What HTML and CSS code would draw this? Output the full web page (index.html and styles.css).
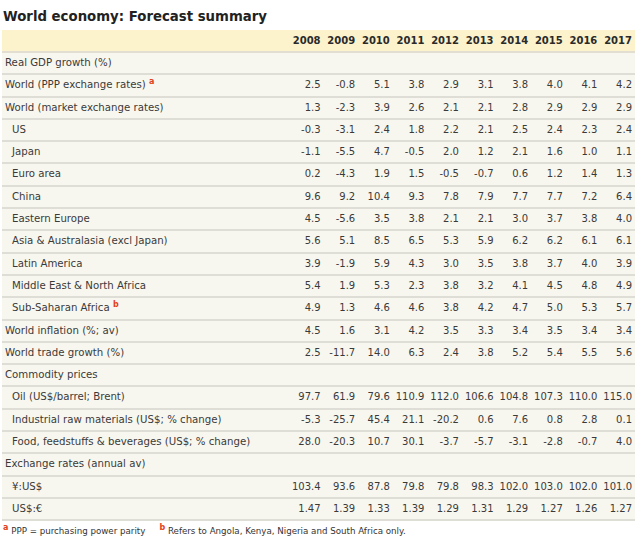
FILE: index.html
```html
<!DOCTYPE html>
<html>
<head>
<meta charset="utf-8">
<link rel="stylesheet" href="styles.css">
</head>
<body>
<div class="page">
<h1 class="title">World economy: Forecast summary</h1>
<table class="fc">
<colgroup><col class="c-label"><col span="10"></colgroup>
<thead>
<tr><th></th><th>2008</th><th>2009</th><th>2010</th><th>2011</th><th>2012</th><th>2013</th><th>2014</th><th>2015</th><th>2016</th><th>2017</th></tr>
</thead>
<tbody>
<tr><td class="lbl">Real GDP growth (%)</td><td></td><td></td><td></td><td></td><td></td><td></td><td></td><td></td><td></td><td></td></tr>
<tr><td class="lbl">World (PPP exchange rates) <sup class="fn">a</sup></td><td>2.5</td><td>-0.8</td><td>5.1</td><td>3.8</td><td>2.9</td><td>3.1</td><td>3.8</td><td>4.0</td><td>4.1</td><td>4.2</td></tr>
<tr><td class="lbl">World (market exchange rates)</td><td>1.3</td><td>-2.3</td><td>3.9</td><td>2.6</td><td>2.1</td><td>2.1</td><td>2.8</td><td>2.9</td><td>2.9</td><td>2.9</td></tr>
<tr><td class="lbl ind">US</td><td>-0.3</td><td>-3.1</td><td>2.4</td><td>1.8</td><td>2.2</td><td>2.1</td><td>2.5</td><td>2.4</td><td>2.3</td><td>2.4</td></tr>
<tr><td class="lbl ind">Japan</td><td>-1.1</td><td>-5.5</td><td>4.7</td><td>-0.5</td><td>2.0</td><td>1.2</td><td>2.1</td><td>1.6</td><td>1.0</td><td>1.1</td></tr>
<tr><td class="lbl ind">Euro area</td><td>0.2</td><td>-4.3</td><td>1.9</td><td>1.5</td><td>-0.5</td><td>-0.7</td><td>0.6</td><td>1.2</td><td>1.4</td><td>1.3</td></tr>
<tr><td class="lbl ind">China</td><td>9.6</td><td>9.2</td><td>10.4</td><td>9.3</td><td>7.8</td><td>7.9</td><td>7.7</td><td>7.7</td><td>7.2</td><td>6.4</td></tr>
<tr><td class="lbl ind">Eastern Europe</td><td>4.5</td><td>-5.6</td><td>3.5</td><td>3.8</td><td>2.1</td><td>2.1</td><td>3.0</td><td>3.7</td><td>3.8</td><td>4.0</td></tr>
<tr><td class="lbl ind">Asia &amp; Australasia (excl Japan)</td><td>5.6</td><td>5.1</td><td>8.5</td><td>6.5</td><td>5.3</td><td>5.9</td><td>6.2</td><td>6.2</td><td>6.1</td><td>6.1</td></tr>
<tr><td class="lbl ind">Latin America</td><td>3.9</td><td>-1.9</td><td>5.9</td><td>4.3</td><td>3.0</td><td>3.5</td><td>3.8</td><td>3.7</td><td>4.0</td><td>3.9</td></tr>
<tr><td class="lbl ind">Middle East &amp; North Africa</td><td>5.4</td><td>1.9</td><td>5.3</td><td>2.3</td><td>3.8</td><td>3.2</td><td>4.1</td><td>4.5</td><td>4.8</td><td>4.9</td></tr>
<tr><td class="lbl ind">Sub-Saharan Africa <sup class="fn">b</sup></td><td>4.9</td><td>1.3</td><td>4.6</td><td>4.6</td><td>3.8</td><td>4.2</td><td>4.7</td><td>5.0</td><td>5.3</td><td>5.7</td></tr>
<tr><td class="lbl">World inflation (%; av)</td><td>4.5</td><td>1.6</td><td>3.1</td><td>4.2</td><td>3.5</td><td>3.3</td><td>3.4</td><td>3.5</td><td>3.4</td><td>3.4</td></tr>
<tr><td class="lbl">World trade growth (%)</td><td>2.5</td><td>-11.7</td><td>14.0</td><td>6.3</td><td>2.4</td><td>3.8</td><td>5.2</td><td>5.4</td><td>5.5</td><td>5.6</td></tr>
<tr><td class="lbl">Commodity prices</td><td></td><td></td><td></td><td></td><td></td><td></td><td></td><td></td><td></td><td></td></tr>
<tr><td class="lbl ind">Oil (US$/barrel; Brent)</td><td>97.7</td><td>61.9</td><td>79.6</td><td>110.9</td><td>112.0</td><td>106.6</td><td>104.8</td><td>107.3</td><td>110.0</td><td>115.0</td></tr>
<tr><td class="lbl ind">Industrial raw materials (US$; % change)</td><td>-5.3</td><td>-25.7</td><td>45.4</td><td>21.1</td><td>-20.2</td><td>0.6</td><td>7.6</td><td>0.8</td><td>2.8</td><td>0.1</td></tr>
<tr><td class="lbl ind">Food, feedstuffs &amp; beverages (US$; % change)</td><td>28.0</td><td>-20.3</td><td>10.7</td><td>30.1</td><td>-3.7</td><td>-5.7</td><td>-3.1</td><td>-2.8</td><td>-0.7</td><td>4.0</td></tr>
<tr><td class="lbl">Exchange rates (annual av)</td><td></td><td></td><td></td><td></td><td></td><td></td><td></td><td></td><td></td><td></td></tr>
<tr><td class="lbl ind">¥:US$</td><td>103.4</td><td>93.6</td><td>87.8</td><td>79.8</td><td>79.8</td><td>98.3</td><td>102.0</td><td>103.0</td><td>102.0</td><td>101.0</td></tr>
<tr><td class="lbl ind">US$:€</td><td>1.47</td><td>1.39</td><td>1.33</td><td>1.39</td><td>1.29</td><td>1.31</td><td>1.29</td><td>1.27</td><td>1.26</td><td>1.27</td></tr>
</tbody>
</table>
<div class="notes">
<span class="note"><sup class="fn">a</sup> PPP = purchasing power parity</span>
<span class="note"><sup class="fn">b</sup> Refers to Angola, Kenya, Nigeria and South Africa only.</span>
</div>
</div>
</body>
</html>
```
FILE: styles.css
```css
html, body {
  margin: 0;
  padding: 0;
  background: #ffffff;
}
.page {
  font-family: "DejaVu Sans", Verdana, sans-serif;
  color: #3a3a3a;
  padding: 0 5px 0 2px;
}
.title {
  margin: 0;
  padding: 9px 0 0 1px;
  height: 30px;
  box-sizing: border-box;
  font-size: 13.3px;
  line-height: 16px;
  font-weight: bold;
  color: #222222;
}
.fc {
  width: 633px;
  border-collapse: collapse;
  table-layout: fixed;
  font-size: 10px;
}
.c-label {
  width: 287px;
}
.fc th {
  background: #fcf3cd;
  font-weight: bold;
  color: #2a2a2a;
  text-align: right;
  padding: 4px 3px 4px 0;
  height: 21px;
  box-sizing: border-box;
  line-height: 13px;
  border-bottom: 2px solid #e2dfd2;
  white-space: nowrap;
}
.fc td {
  background: #f8f7ef;
  text-align: right;
  padding: 4px 3px 4px 0;
  line-height: 12.3px;
  height: 20.3px;
  box-sizing: border-box;
  border-bottom: 2px solid #dfded6;
  white-space: nowrap;
}
.fc td.lbl {
  text-align: left;
  padding-left: 3px;
  font-size: 10.2px;
}
.fc td.ind {
  padding-left: 10px;
}
.fn {
  color: #e3401e;
  font-weight: bold;
  font-size: 8px;
  line-height: 0;
  vertical-align: 4px;
}
.notes {
  display: flex;
  gap: 14px;
  padding: 4px 0 0 1px;
  font-size: 8.7px;
  color: #333333;
  line-height: 12px;
}
```
